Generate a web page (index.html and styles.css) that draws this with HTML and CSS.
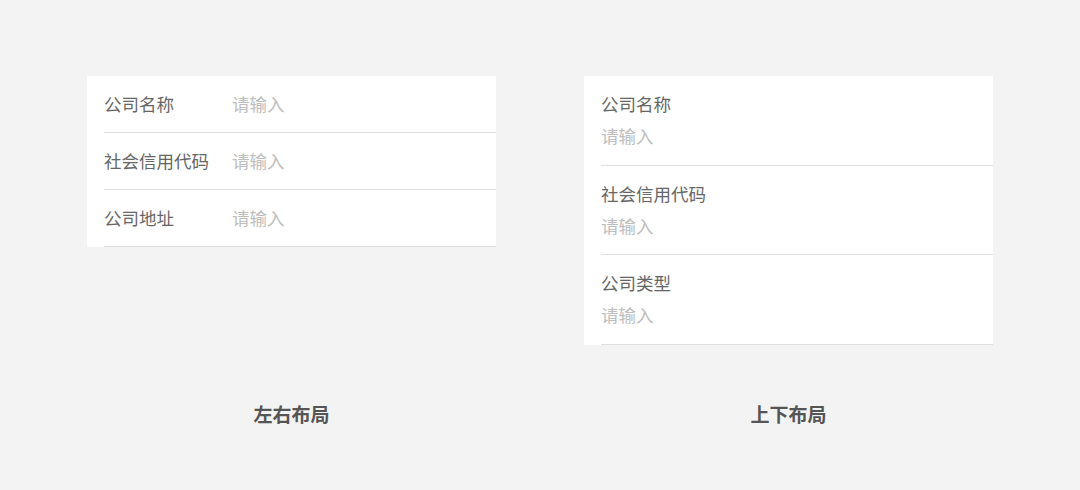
FILE: index.html
```html
<!DOCTYPE html>
<html lang="zh">
<head>
<meta charset="utf-8">
<link rel="stylesheet" href="styles.css">
</head>
<body>
<div class="page">
  <div class="card card-h">
    <div class="row-h"><span class="label">公司名称</span><span class="ph">请输入</span></div>
    <div class="row-h"><span class="label">社会信用代码</span><span class="ph">请输入</span></div>
    <div class="row-h"><span class="label">公司地址</span><span class="ph">请输入</span></div>
  </div>
  <div class="card card-v">
    <div class="row-v"><span class="label">公司名称</span><span class="ph">请输入</span></div>
    <div class="row-v"><span class="label">社会信用代码</span><span class="ph">请输入</span></div>
    <div class="row-v"><span class="label">公司类型</span><span class="ph">请输入</span></div>
  </div>
  <div class="caption">左右布局</div>
  <div class="caption">上下布局</div>
</div>
</body>
</html>
```
FILE: styles.css
```css
html, body {
  margin: 0;
  padding: 0;
  background: #f3f3f3;
  font-family: "Noto Sans CJK SC", "Noto Sans", sans-serif;
}
.page {
  display: grid;
  grid-template-columns: 409px 409px;
  column-gap: 88px;
  row-gap: 58px;
  justify-content: center;
  padding-top: 76px;
}
.card {
  background: #fff;
  align-self: start;
  padding-left: 17px;
}
.row-h {
  display: flex;
  align-items: center;
  height: 56px;
  border-bottom: 1px solid #dedede;
}
.row-h .label {
  width: 128px;
}
.row-v {
  display: flex;
  flex-direction: column;
  height: 88.5px;
  border-bottom: 1px solid #dedede;
}
.row-v .label {
  margin-top: 16px;
}
.row-v .ph {
  margin-top: 8px;
}
.label {
  font-size: 17.5px;
  line-height: 24px;
  color: #666;
  white-space: nowrap;
}
.ph {
  font-size: 17.5px;
  line-height: 24px;
  color: #bdbdbd;
}
.caption {
  text-align: center;
  font-size: 19px;
  line-height: 22px;
  font-weight: bold;
  color: #555;
}
```
